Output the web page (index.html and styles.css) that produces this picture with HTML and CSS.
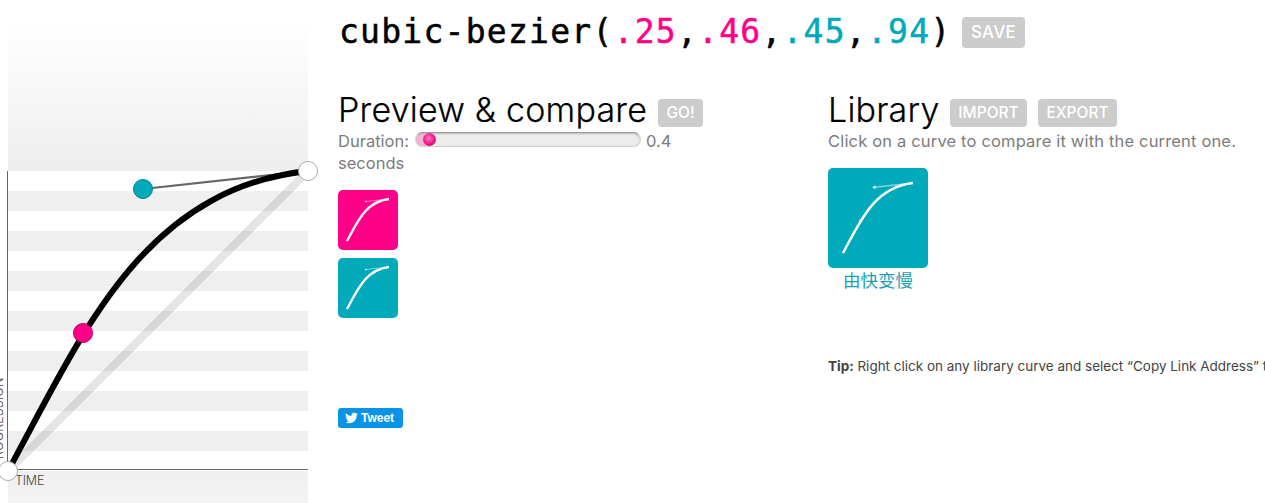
FILE: index.html
```html
<!DOCTYPE html>
<html lang="en">
<head>
<meta charset="utf-8">
<title>cubic-bezier</title>
<link rel="stylesheet" href="styles.css">
</head>
<body>
<svg class="symbols" width="0" height="0">
  <symbol id="curve" viewBox="0 0 100 100">
    <path class="thin" d="M85 15 46.5 19.2M15 85 32.5 52.8"/>
    <circle class="dot" cx="46.5" cy="19.2" r="1.8"/>
    <circle class="dot" cx="32.5" cy="52.8" r="1.8"/>
    <path class="thick" d="M15 85C32.5 52.8 46.5 19.2 85 15"/>
  </symbol>
</svg>
<div class="page">
  <aside class="plot">
    <div class="fade fade-top"></div>
    <div class="grid"></div>
    <div class="fade fade-bottom"><span class="time">TIME</span></div>
    <span class="progression">PROGRESSION</span>
    <svg class="canvas" width="330" height="503" viewBox="0 0 330 503">
      <path d="M8 471 308 171" stroke="#000" stroke-opacity=".1" stroke-width="8"/>
      <path d="M7.5 171V471M8 469.5H308" stroke="#666"/>
      <path d="M8 471 83 333M308 171 143 189" stroke="#666" stroke-width="2.2"/>
      <path d="M8 471C83 333 143 189 308 171" fill="none" stroke="#000" stroke-width="6"/>
      <circle cx="8" cy="471" r="9.5" fill="#fff" stroke="#aaa"/>
      <circle cx="308" cy="171" r="9.5" fill="#fff" stroke="#aaa"/>
      <circle cx="83" cy="333" r="9.5" fill="#f08" stroke="#b8005f"/>
      <circle cx="143" cy="189" r="9.5" fill="#0ab" stroke="#008591"/>
    </svg>
  </aside>
  <main class="content">
    <header class="title">
      <h1>cubic-bezier(<span class="p1">.25</span>,<span class="p1">.46</span>,<span class="p2">.45</span>,<span class="p2">.94</span>)</h1>
      <button class="btn save">SAVE</button>
    </header>
    <div class="columns">
      <section class="preview">
        <div class="heading"><h2>Preview &amp; compare</h2><button class="btn go">GO!</button></div>
        <div class="duration"><span>Duration:</span><div class="slider"><i class="knob"></i></div><span>0.4</span></div>
        <div class="duration">seconds</div>
        <svg class="tile pink"><use href="#curve"/></svg>
        <svg class="tile"><use href="#curve"/></svg>
        <a class="tweet"><svg width="13" height="12" viewBox="0 0 24 22"><path fill="#fff" d="M24 3.6c-.9.4-1.8.7-2.8.8 1-.6 1.8-1.6 2.2-2.7-1 .6-2 1-3.1 1.2A4.9 4.9 0 0 0 12 7.400C7.900 7.200 4.300 5.200 1.900 2.200A4.900 4.900 0 0 0 3.400 8.800c-.8 0-1.600-.2-2.200-.6 0 2.300 1.600 4.400 3.900 4.900-.7.200-1.500.2-2.200.1.600 2 2.400 3.400 4.600 3.400A9.900 9.900 0 0 1 .2 18.600 14 14 0 0 0 21.500 6.100c1-.7 1.800-1.600 2.500-2.500z"/></svg><span>Tweet</span></a>
      </section>
      <section class="library">
        <div class="heading"><h2>Library</h2><button class="btn import">IMPORT</button><button class="btn export">EXPORT</button></div>
        <p class="hint">Click on a curve to compare it with the current one.</p>
        <a class="item"><svg class="tile large"><use href="#curve"/></svg><span>由快变慢</span></a>
        <p class="tip"><b>Tip:</b> Right click on any library curve and select “Copy Link Address” t</p>
      </section>
    </div>
  </main>
</div>
</body>
</html>
```
FILE: styles.css
```css
* { box-sizing: border-box; }
body { margin: 0; background: #fff; color: #000; font-family: Inter, "Noto Sans CJK SC", sans-serif; overflow: hidden; }
h1, h2, p { margin: 0; }
.symbols { position: absolute; }
.page { display: flex; height: 503px; overflow: hidden; }
.plot { position: relative; width: 338px; flex: none; padding: 21px 0 0 8px; overflow: hidden; }
.fade, .grid { width: 300px; }
.fade-top { height: 150px; background: linear-gradient(#fff, #eee); }
.grid { height: 300px; background: repeating-linear-gradient(#fff 0 20px, #efefef 20px 40px); }
.fade-bottom { height: 150px; background: linear-gradient(#f0f0f0, #fff); padding: 2px 0 0 7px; }
.time, .progression { font-size: 12.5px; font-weight: 300; line-height: 16px; color: #444; }
.time { display: block; letter-spacing: -.2px; }
.progression { position: absolute; left: -9px; top: 371px; writing-mode: vertical-rl; transform: rotate(180deg); letter-spacing: .15px; height: 96px; }
.canvas { position: absolute; left: 0; top: 0; fill: none; }
.content { flex: 1; min-width: 0; }
.title { display: flex; align-items: flex-start; height: 91px; }
h1 { width: 624px; font: 400 33px/40px "DejaVu Sans Mono", monospace; letter-spacing: 1.25px; padding: 12px 0 0 1px; white-space: nowrap; -webkit-text-stroke: .5px currentColor; }
.p1 { color: #f08; }
.p2 { color: #0ab; }
.btn { border: 0; border-radius: 4px; background: #ccc; color: #fff; padding: 0; height: 28px; font: 500 15.500px/28px Inter, sans-serif; text-align: center; white-space: nowrap; }
.save { width: 63px; height: 31px; margin-top: 17px; font-size: 17px; line-height: 31px; letter-spacing: .3px; }
.columns { display: flex; }
.preview { width: 490px; flex: none; }
.library { flex: 1; min-width: 0; }
.heading { display: flex; height: 40px; align-items: flex-start; }
h2 { font-weight: 300; font-size: 34px; line-height: 38px; white-space: nowrap; -webkit-text-stroke: .2px currentColor; }
.preview h2 { width: 320px; letter-spacing: .2px; }
.library h2 { width: 122px; letter-spacing: .2px; }
.heading .btn { margin-top: 8px; }
.go { width: 45px; }
.import { width: 77px; }
.export { width: 79px; margin-left: 11px; }
.duration, .hint { display: flex; font-size: 16.500px; line-height: 20px; font-weight: 400; color: #7c7c7c; white-space: nowrap; height: 22px; }
.hint { letter-spacing: .17px; }
.duration span:first-child { width: 77px; }
.slider { width: 226px; height: 15px; margin: 1px 5px 0 0; padding: 1px 7px; border-radius: 8px; border: 1px solid #d0d0d0; border-top-color: #999; background: linear-gradient(90deg, #f5b4d5 14px, #ececec 14px); box-shadow: inset 0 1px 2px #bbb; }
.knob { display: block; width: 13px; height: 13px; margin-top: -1px; border-radius: 50%; background: radial-gradient(circle at 45% 40%, #ff78bc, #ee1688 55%, #b00060); }
.tile { display: block; width: 60px; height: 60px; border-radius: 5px; background: #0ab; margin-bottom: 8px; }
.duration + .tile { margin-top: 15px; }
.pink { background: #f08; }
.thick { fill: none; stroke: #fff; stroke-width: var(--curve-width, 4); }
.large { --curve-width: 2.5; }
.thin { stroke: #fff; stroke-opacity: .5; stroke-width: 1.5; }
.dot { fill: #fff; fill-opacity: .65; }
.tweet { display: flex; align-items: center; gap: 3px; width: 65px; height: 20px; margin-top: 90px; padding-left: 7px; border-radius: 3px; background: #0794e7; color: #fff; font: 700 12px/20px "Liberation Sans", sans-serif; }
.item { display: block; width: 100px; margin-top: 15px; color: #1a9fb5; font-size: 17.500px; line-height: 25px; text-align: center; font-weight: 400; }
.large { width: 100px; height: 100px; margin: 0; }
.tip { margin-top: 63px; font-size: 13.500px; line-height: 20px; color: #444; letter-spacing: -.01px; white-space: nowrap; overflow: hidden; }
```
